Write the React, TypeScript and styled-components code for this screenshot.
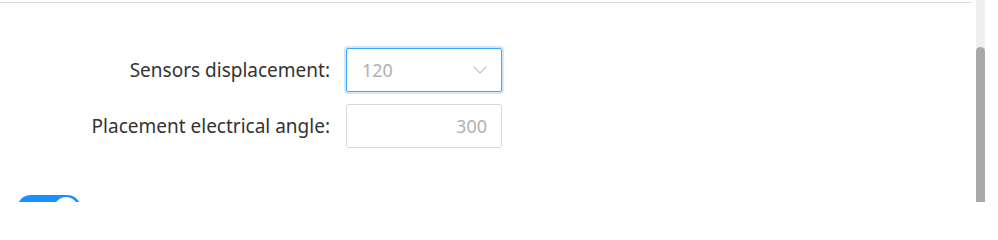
import React from 'react';
import styled, { createGlobalStyle } from 'styled-components';

const GlobalStyle = createGlobalStyle`
  html, body {
    margin: 0;
    padding: 0;
    background: #fff;
    font-family: "Noto Sans", "Open Sans", sans-serif;
  }
`;

const Page = styled.div`
  display: flex;
  height: 202px;
  overflow: hidden;
`;

const Main = styled.div`
  flex: 1;
  padding-right: 4px;
`;

const Divider = styled.div`
  margin-top: 2px;
  height: 1px;
  background: #dcdcdc;
`;

const Form = styled.div`
  display: grid;
  grid-template-columns: 330px 156px;
  grid-auto-rows: 44px;
  column-gap: 16px;
  row-gap: 12px;
  padding-top: 45px;
`;

const Label = styled.label`
  display: flex;
  align-items: center;
  justify-content: flex-end;
  font-size: 19px;
  color: #333;
  white-space: nowrap;
`;

const Field = styled.div<{ $focused?: boolean; $align?: 'left' | 'right' }>`
  display: flex;
  align-items: center;
  justify-content: ${p => (p.$align === 'right' ? 'flex-end' : 'space-between')};
  box-sizing: border-box;
  height: 44px;
  padding: 0 14px 0 15px;
  border: 1px solid ${p => (p.$focused ? '#40a9ff' : '#d9d9d9')};
  border-radius: 2px;
  box-shadow: ${p => (p.$focused ? '0 0 0 2px rgba(24, 144, 255, 0.2)' : 'none')};
  font-size: 18px;
  color: #b0b0b0;
`;

const Chevron = styled.svg`
  width: 14px;
  height: 8px;
  flex: none;
`;

const Switch = styled.div`
  position: relative;
  margin: 47px 0 0 17px;
  width: 64px;
  height: 28px;
  border-radius: 14px;
  background: #1890ff;
`;

const Knob = styled.span`
  position: absolute;
  top: 2px;
  right: 3px;
  width: 24px;
  height: 24px;
  border-radius: 50%;
  background: #fff;
`;

const ScrollTrack = styled.div`
  width: 9px;
  margin-right: 13px;
  background: #efefef;
  display: flex;
  flex-direction: column;
`;

const ScrollThumb = styled.div`
  margin-top: 47px;
  flex: 1;
  background: #a9a9a9;
  border-radius: 5px 5px 0 0;
`;

const App = () => {
  return (
    <>
      <GlobalStyle />
      <Page>
        <Main>
          <Divider />
          <Form>
            <Label>Sensors displacement:</Label>
            <Field $focused>
              120
              <Chevron viewBox="0 0 14 8">
                <path d="M0.7 0.7 L7 7 L13.3 0.7" fill="none" stroke="#bfbfbf" strokeWidth="1.2" />
              </Chevron>
            </Field>
            <Label>Placement electrical angle:</Label>
            <Field $align="right">300</Field>
          </Form>
          <Switch>
            <Knob />
          </Switch>
        </Main>
        <ScrollTrack>
          <ScrollThumb />
        </ScrollTrack>
      </Page>
    </>
  );
};

export default App;
